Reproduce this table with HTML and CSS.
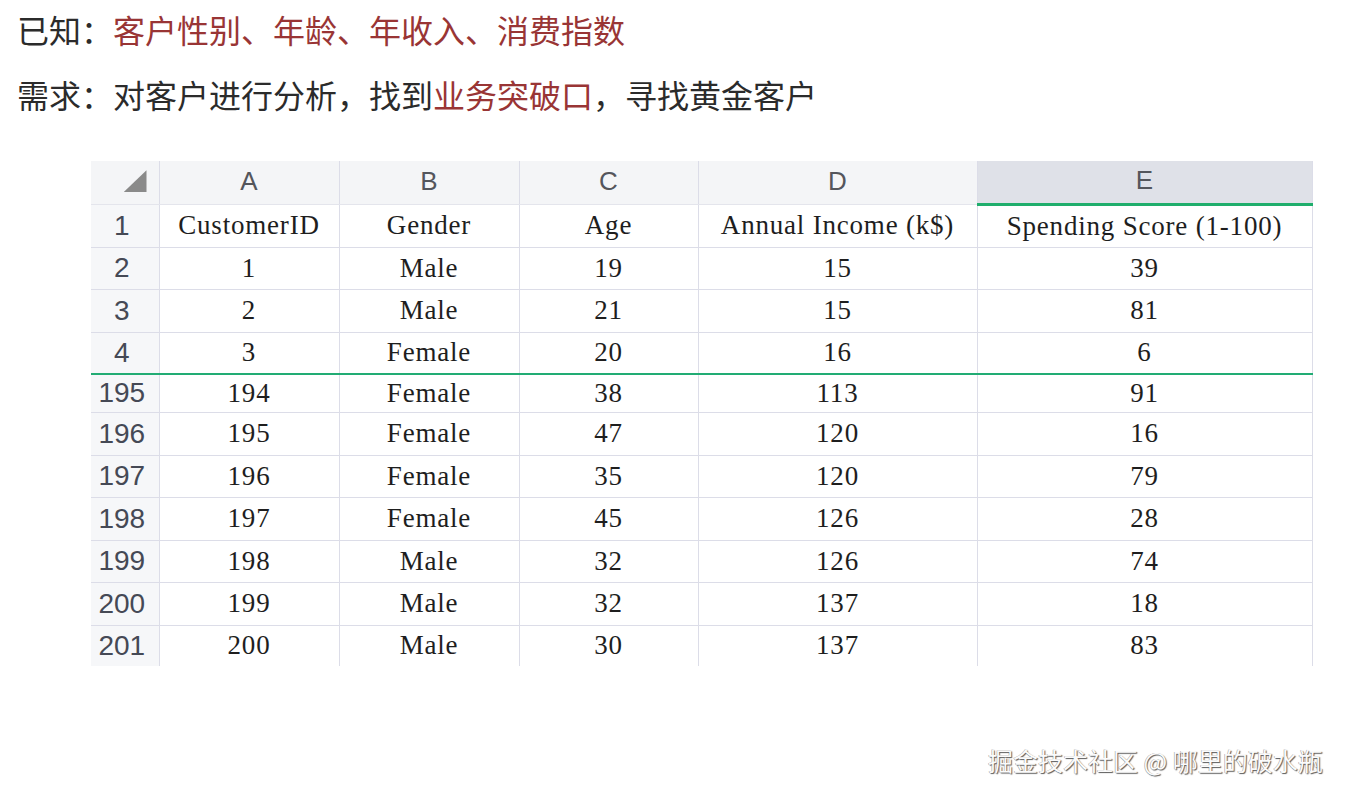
FILE: index.html
```html
<!DOCTYPE html>
<html lang="zh">
<head>
<meta charset="utf-8">
<title>客户分析</title>
<link rel="stylesheet" href="styles.css">
</head>
<body>
<div class="page">
  <p class="line line-first">已知：<span class="red">客户性别、年龄、年收入、消费指数</span></p>
  <p class="line line-second">需求：对客户进行分析，找到<span class="red">业务突破口</span>，寻找黄金客户</p>

  <table class="sheet">
    <colgroup>
      <col class="c-rh"><col class="c-a"><col class="c-b"><col class="c-c"><col class="c-d"><col class="c-e">
    </colgroup>
    <tr class="hdr">
      <th class="corner"><div class="tri"></div></th>
      <th>A</th><th>B</th><th>C</th><th>D</th><th class="sel">E</th>
    </tr>
    <tr class="r43"><th class="rh">1</th><td>CustomerID</td><td>Gender</td><td>Age</td><td>Annual Income (k$)</td><td>Spending Score (1-100)</td></tr>
    <tr class="r42"><th class="rh">2</th><td>1</td><td>Male</td><td>19</td><td>15</td><td>39</td></tr>
    <tr class="r43"><th class="rh">3</th><td>2</td><td>Male</td><td>21</td><td>15</td><td>81</td></tr>
    <tr class="r42 freeze"><th class="rh">4</th><td>3</td><td>Female</td><td>20</td><td>16</td><td>6</td></tr>
    <tr class="r38"><th class="rh">195</th><td>194</td><td>Female</td><td>38</td><td>113</td><td>91</td></tr>
    <tr class="r43"><th class="rh">196</th><td>195</td><td>Female</td><td>47</td><td>120</td><td>16</td></tr>
    <tr class="r42"><th class="rh">197</th><td>196</td><td>Female</td><td>35</td><td>120</td><td>79</td></tr>
    <tr class="r43"><th class="rh">198</th><td>197</td><td>Female</td><td>45</td><td>126</td><td>28</td></tr>
    <tr class="r42"><th class="rh">199</th><td>198</td><td>Male</td><td>32</td><td>126</td><td>74</td></tr>
    <tr class="r43"><th class="rh">200</th><td>199</td><td>Male</td><td>32</td><td>137</td><td>18</td></tr>
    <tr class="r41 last"><th class="rh">201</th><td>200</td><td>Male</td><td>30</td><td>137</td><td>83</td></tr>
  </table>

  <div class="watermark">掘金技术社区 @ 哪里的破水瓶</div>
</div>
</body>
</html>
```

FILE: styles.css
```css
html, body {
  margin: 0;
  padding: 0;
  background: #ffffff;
}

.page {
  width: 1346px;
  height: 797px;
  position: relative;
  overflow: hidden;
  font-family: "Noto Sans CJK SC", "Noto Sans", sans-serif;
}

.line {
  margin: 0;
  padding-left: 17px;
  font-size: 32px;
  line-height: 44px;
  color: #2b2b2b;
  font-weight: 400;
  white-space: nowrap;
}

.line-first {
  padding-top: 7px;
}

.line-second {
  margin-top: 21px;
}

.red {
  color: #993535;
}

.sheet {
  margin-top: 45px;
  margin-left: 91px;
  border-collapse: collapse;
  table-layout: fixed;
  width: 1221px;
}

.c-rh { width: 68px; }
.c-a { width: 180px; }
.c-b { width: 180px; }
.c-c { width: 179px; }
.c-d { width: 279px; }
.c-e { width: 335px; }

.sheet th,
.sheet td {
  padding: 0;
  border-right: 1px solid #dcdde8;
  border-bottom: 1px solid #dcdde8;
  text-align: center;
  vertical-align: middle;
  white-space: nowrap;
  overflow: visible;
}

.sheet td {
  font-family: "Liberation Serif", "Noto Sans CJK SC", serif;
  font-size: 27px;
  letter-spacing: 0.8px;
  color: #1e1e1e;
  font-weight: normal;
}

.hdr {
  height: 43px;
}

.hdr th {
  background: #f4f5f7;
  font-family: "Liberation Sans", "Noto Sans", sans-serif;
  font-weight: normal;
  font-size: 26px;
  color: #54565c;
  border-bottom: 1px solid #e4e5ec;
  padding-bottom: 2px;
}

.hdr th.sel {
  background: #dfe1e8;
  border-bottom: 3px solid #1fae6c;
}

.corner .tri {
  width: 23px;
  height: 22px;
  margin-left: auto;
  margin-right: 12px;
  background: #8a8a8a;
  clip-path: polygon(100% 0, 100% 100%, 0 100%);
}

.sheet th.rh {
  background: #f6f7f9;
  font-family: "Liberation Sans", "Noto Sans", sans-serif;
  font-weight: normal;
  font-size: 28px;
  color: #454955;
  padding-right: 6px;
  letter-spacing: 0;
}

.r43 { height: 43px; }
.r42 { height: 42px; }
.r41 { height: 41px; }
.r38 { height: 38px; }

.freeze th,
.freeze td {
  border-bottom: 2px solid #22ac74;
}

.last th,
.last td {
  border-bottom: none;
}

.watermark {
  position: absolute;
  left: 988px;
  top: 743px;
  font-family: "Noto Sans CJK SC", sans-serif;
  font-size: 25px;
  line-height: 34px;
  color: #fbfbfb;
  text-shadow: 1px 1px 1px #5a5a5a, -0.5px -0.5px 0.5px #9a9a9a;
  white-space: nowrap;
}
```
